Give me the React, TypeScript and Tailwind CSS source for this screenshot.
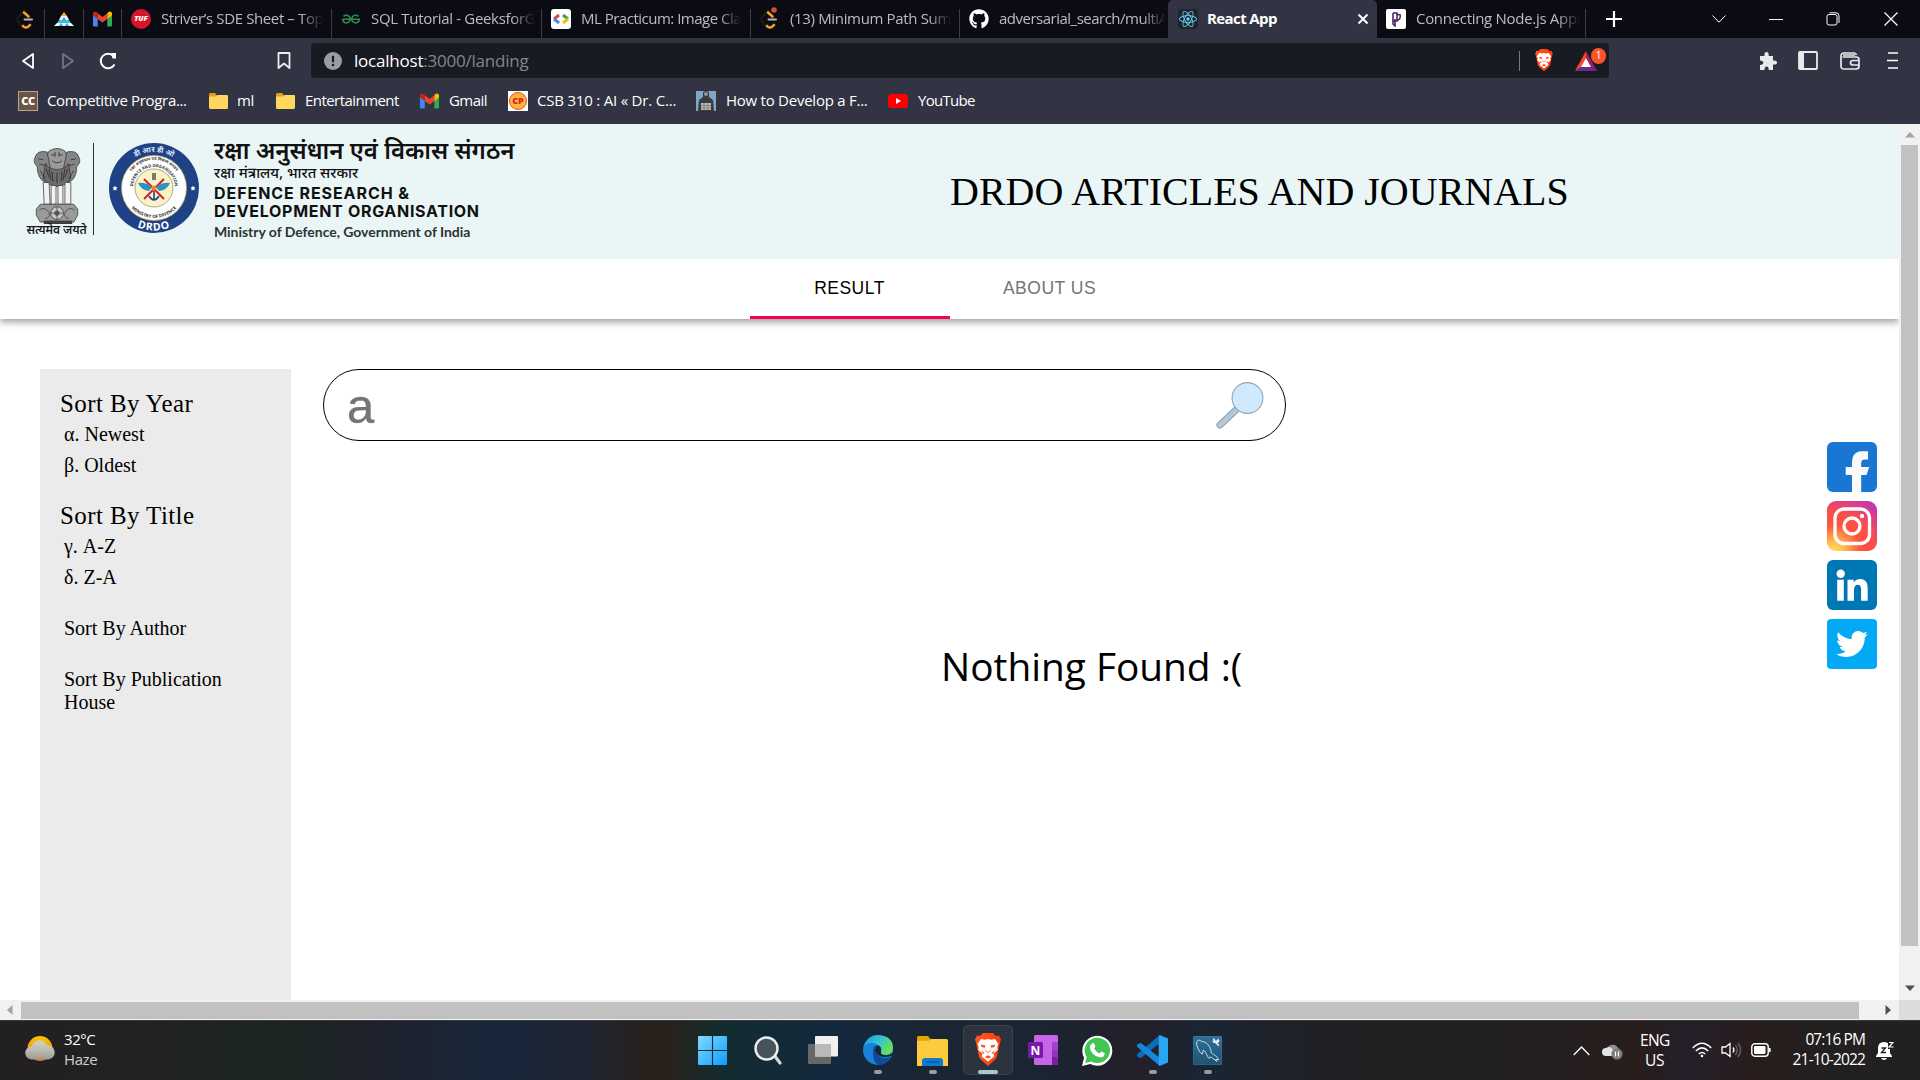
import type { ReactNode } from "react";
import { FaGithub, FaTwitter } from "react-icons/fa";
import { SiGeeksforgeeks, SiReact } from "react-icons/si";

/* ---------- small icons ---------- */

function GmailIcon() {
  return (
    <svg viewBox="0 0 20 16" className="h-4 w-[19px] shrink-0">
      <path d="M0 3v11.5Q0 16 1.5 16H5V7z" fill="#4285f4" />
      <path d="M20 3v11.500q0 1.500-1.500 1.500H15V7z" fill="#34a853" />
      <path d="M15 2v6l5-3.600V2.500C20 0 17.500-.5 16 .8z" fill="#fbbc04" />
      <path d="M5 8V2l5 3.800L15 2v6l-5 3.800z" fill="#ea4335" />
      <path d="M0 2.500v1.900L5 8V2L4 .8C2.500-.5 0 0 0 2.500z" fill="#c5221f" />
    </svg>
  );
}

function PyramidIcon() {
  return (
    <svg viewBox="0 0 20 14" className="h-[14px] w-5">
      <path d="M10 0l3 4H7z" fill="#f4b04a" />
      <path d="M7 4h6l2 4H5z" fill="#e9f7fa" />
      <path d="M5 8h10l2 3H3z" fill="#49b8d8" />
      <path d="M3 11h14l3 3H0z" fill="#f2fbfd" />
      <path d="M5 14l2-3 2 3zM11 14l2-3 2 3zM8 8l2-3 2 3z" fill="#2aa5c8" />
    </svg>
  );
}

function FolderIcon() {
  return (
    <svg viewBox="0 0 19 16" className="h-4 w-[19px] shrink-0">
      <path d="M0 1.500Q0 0 1.500 0H6l2 2.500h9.500Q19 2.500 19 4v4H0z" fill="#e0a018" />
      <path d="M0 4.500Q0 3.500 1 3.500h6L8.500 2H18q1 0 1 1v11.500q0 1.500-1.500 1.500h-16Q0 16 0 14.500z" fill="#ffd75e" />
    </svg>
  );
}

function LeetIcon({ badge = false }: { badge?: boolean }) {
  return (
    <svg viewBox="0 0 20 24" className="h-6 w-5">
      <path d="M9 3L3 9.500Q0 13 3 16l4 5" stroke="#1d1a14" strokeWidth="2.400" fill="none" />
      <path d="M8 5.500l4.500 4M7 19q3 3.500 7-1" stroke="#f0a22e" strokeWidth="2.600" fill="none" strokeLinecap="round" />
      <path d="M8.500 12.500H16" stroke="#b8b8b8" strokeWidth="2" strokeLinecap="round" />
      {badge && <circle cx="14" cy="3" r="2.800" fill="#e0443c" />}
    </svg>
  );
}

function CodeLabsIcon() {
  return (
    <span className="flex size-5 items-center justify-center rounded-[3px] bg-white">
      <svg viewBox="0 0 18 10" className="h-[10px] w-[18px]" fill="none" strokeWidth="3">
        <path d="M7 1L2 5" stroke="#ea4335" />
        <path d="M2 5l5 4" stroke="#4285f4" />
        <path d="M11 1l5 4" stroke="#34a853" />
        <path d="M16 5l-5 4" stroke="#fbbc04" />
      </svg>
    </span>
  );
}

function BraveLion({ className }: { className: string }) {
  return (
    <svg viewBox="0 0 26 34" className={className}>
      <defs>
        <linearGradient id="lion" x1="0" x2="1">
          <stop offset="0" stopColor="#ff5a1c" />
          <stop offset="1" stopColor="#fb3a10" />
        </linearGradient>
      </defs>
      <path d="M8 0h10l3 3 3-.5 2 4-1 3-3 14q-.5 2-3 4l-6 5.500-6-5.500q-2.500-2-3-4L1 9.500 0 6.500l2-4L5 3z" fill="url(#lion)" />
      <path d="M6 6l4 .8 3-.8 3 .8 4-.8 3.500 5-1.200 2.800.4 3.200-4.200 3.500.8 3L13 28.500 6.700 23.500l.8-3L3.300 17l.4-3.200L2.500 11z" fill="#fff" />
      <path d="M5.500 11.500l5 .9-.8 2.300-2.900-.8zM20.500 11.500l-5 .9.8 2.300 2.900-.8zM11.300 14.500l-.8 3.700 2.500 1.600 2.500-1.600-.8-3.700.3 3.200-2 1.200-2-1.200zM6 17.500l3.500 2.200-1 1.300zM20 17.500l-3.500 2.200 1 1.300zM9.800 24l3.200-1.700 3.200 1.700-3.200 1.600z" fill="#fb4a18" />
    </svg>
  );
}

/* ---------- browser chrome ---------- */

type Tab = { icon: ReactNode; label: string; text: string; width: string };

const pinned = [
  { id: "leet", icon: <LeetIcon />, box: "w-[45px] pl-2" },
  { id: "pyramid", icon: <PyramidIcon />, box: "w-[39px]" },
  { id: "gmail", icon: <GmailIcon />, box: "w-[38px]" },
];

const tabs: Tab[] = [
  {
    icon: (
      <span className="flex size-5 items-center justify-center rounded-full bg-[#d7152a] text-[7.5px] font-extrabold italic text-white">TUF</span>
    ),
    label: "Striver’s SDE Sheet – Top",
    text: "tracking-[-0.38px]",
    width: "w-[210px]",
  },
  { icon: <SiGeeksforgeeks className="size-[18px] text-[#2f8d46]" />, label: "SQL Tutorial - GeeksforG", text: "tracking-[-0.32px]", width: "w-[210px]" },
  { icon: <CodeLabsIcon />, label: "ML Practicum: Image Cla", text: "tracking-[-0.5px]", width: "w-[209px]" },
  { icon: <LeetIcon badge />, label: "(13) Minimum Path Sum", text: "tracking-[-0.34px]", width: "w-[209px]" },
  { icon: <FaGithub className="size-5 text-white" />, label: "adversarial_search/multiA", text: "tracking-[-0.5px]", width: "w-[208px]" },
];

function TabStrip() {
  return (
    <div className="flex h-[38px] bg-[#0b0b14] text-[15px] text-[#bcbcc0]">
      {pinned.map((p) => (
        <div key={p.id} className={`mt-[9px] flex h-[29px] shrink-0 justify-center border-r border-[#3c3c44] ${p.box}`}>
          <span className="flex h-5 items-center">{p.icon}</span>
        </div>
      ))}
      {tabs.map((t, i) => (
        <div
          key={t.label}
          className={`mt-[9px] flex h-[29px] shrink-0 gap-[10px] pr-0.5 pl-[9px] ${t.width} ${i < 4 ? "border-r border-[#3c3c44]" : ""}`}
        >
          <span className="flex size-5 shrink-0 items-center justify-center">{t.icon}</span>
          <span className={`h-5 overflow-hidden leading-[19px] whitespace-nowrap [mask-image:linear-gradient(90deg,#000_86%,transparent)] ${t.text}`}>{t.label}</span>
        </div>
      ))}
      <div className="flex w-[209px] shrink-0 rounded-t-[5px] bg-[#323443] pt-[9px] pl-[10px]">
        <span className="flex size-5 items-center justify-center rounded-[3px] bg-[#20232a]">
          <SiReact className="size-[18px] text-[#61dafb]" />
        </span>
        <span className="ml-[9px] w-[150px] text-[15px] leading-[19px] font-bold tracking-[-0.6px] text-white">React App</span>
        <svg viewBox="0 0 12 12" className="mt-[4px] size-3" stroke="#fff" strokeWidth="2">
          <path d="M1.500 1.500l9 9M10.500 1.500l-9 9" />
        </svg>
      </div>
      <div className="mt-[9px] flex h-[29px] w-[209px] shrink-0 gap-[10px] border-r border-[#3c3c44] pr-1 pl-[9px]">
        <span className="flex size-5 shrink-0 items-center justify-center rounded-[2px] bg-white">
          <svg viewBox="0 0 14 16" className="h-4 w-[14px]" fill="none" stroke="#4b2a63" strokeWidth="1.600">
            <path d="M4 2v11l2 2V8M4 2h4v8H4M8 4q5-2 2.500 4L8 10" />
          </svg>
        </span>
        <span className="h-5 overflow-hidden leading-[19px] tracking-[-0.3px] whitespace-nowrap [mask-image:linear-gradient(90deg,#000_86%,transparent)]">Connecting Node.js Appl</span>
      </div>
      <div className="flex h-[38px] flex-1 items-center text-white">
        <svg viewBox="0 0 16 16" className="ml-5 size-4" stroke="currentColor" strokeWidth="2.200">
          <path d="M8 0v16M0 8h16" />
        </svg>
        <svg viewBox="0 0 14 8" className="ml-[90px] h-2 w-[14px]" fill="none" stroke="currentColor">
          <path d="M.5 .5L7 7.200 13.500 .5" />
        </svg>
        <svg viewBox="0 0 14 14" className="ml-[43px] size-[14px]" fill="none" stroke="currentColor">
          <path d="M0 7.500h14" />
        </svg>
        <svg viewBox="0 0 14 14" className="ml-[43px] size-[14px]" fill="none" stroke="currentColor">
          <rect x="1" y="2.500" width="10" height="10.500" rx="2" />
          <path d="M3.500 .8H10q3 0 3 3v7" />
        </svg>
        <svg viewBox="0 0 14 14" className="ml-[44px] size-[14px]" fill="none" stroke="currentColor" strokeWidth="1.200">
          <path d="M.5 .5l13 13M13.500 .5l-13 13" />
        </svg>
      </div>
    </div>
  );
}

function Toolbar() {
  return (
    <div className="flex h-[45px] items-center bg-[#323443]">
      <svg viewBox="0 0 12 16" className="ml-[22px] h-4 w-3" fill="none" stroke="#fff" strokeWidth="1.800" strokeLinejoin="round">
        <path d="M11 1L1 8l10 7z" />
      </svg>
      <svg viewBox="0 0 12 16" className="ml-[28px] h-4 w-3" fill="none" stroke="#73747f" strokeWidth="1.800" strokeLinejoin="round">
        <path d="M1 1l10 7-10 7z" />
      </svg>
      <svg viewBox="0 0 18 18" className="ml-[25px] size-[18px]" fill="none" stroke="#fff" strokeWidth="2">
        <path d="M15.500 12.500A7.300 7.300 0 1 1 14.500 4" />
        <path d="M12 1h5v5.500h-3.500z" fill="#fff" stroke="none" />
      </svg>
      <svg viewBox="0 0 14 17" className="ml-[160px] h-[17px] w-[14px]" fill="none" stroke="#eee" strokeWidth="1.800" strokeLinejoin="round">
        <path d="M1.500 1h11v15L7 11.500 1.500 16z" />
      </svg>
      <div className="ml-5 flex h-[35px] w-[1298px] items-center rounded-[4px] bg-[#191b22]">
        <svg viewBox="0 0 18 18" className="ml-[13px] size-[18px]">
          <circle cx="9" cy="9" r="9" fill="#9b9ca6" />
          <path d="M9 3.800v6.400" stroke="#191b22" strokeWidth="2.200" />
          <circle cx="9" cy="13" r="1.300" fill="#191b22" />
        </svg>
        <span className="ml-[12px] w-[1165px] text-[17px] leading-[34px] tracking-[-0.22px] text-[#84858c]">
          <span className="text-white">localhost</span>:3000/landing
        </span>
        <span className="h-5 w-px bg-[#777881]" />
        <BraveLion className="ml-[14px] h-[23px] w-5" />
        <div className="relative ml-[21px] h-5 w-[23px]">
          <svg viewBox="0 0 22 20" className="h-5 w-[22px]">
            <path d="M11 0L0 20l6-3.500L11 7z" fill="#ff4724" />
            <path d="M11 0l11 20-6-3.500L11 7z" fill="#9e1f63" />
            <path d="M0 20h22l-6-4H6z" fill="#662d91" />
            <path d="M11 7l-5 9h10z" fill="#fff" />
          </svg>
          <span className="absolute -top-[3px] left-4 flex h-4 w-[15px] items-center justify-center rounded-full bg-[#fb542b] text-[10px] text-white">1</span>
        </div>
      </div>
      <svg viewBox="0 0 18 18" className="ml-[150px] size-[18px]" fill="#e9e9ec">
        <path d="M1 4h4.500Q5 0 7.500 0T9.700 4H14v4.500q4-.5 4 2t-4 2V18H9.700q.2-3.500-2-3.500T5.500 18H1v-5q3.300-.3 3.300-2.300T1 8.500z" />
      </svg>
      <svg viewBox="0 0 20 19" className="ml-[21px] h-[19px] w-5">
        <rect x="1" y="1" width="18" height="17" rx="1" fill="none" stroke="#e9e9ec" strokeWidth="1.800" />
        <path d="M1 1h5v17H1z" fill="#e9e9ec" />
      </svg>
      <svg viewBox="0 0 20 18" className="ml-[22px] h-[18px] w-5" fill="none" stroke="#e9e9ec" strokeWidth="1.700">
        <path d="M2.500 5H16q3 0 3 2.500V14q0 3-3 3H4q-3 0-3-3V4q0-3 3-3h10q2 0 2.500 2M3 3h12" />
        <path d="M19 8.500h-6q-2.500 0-2.500 2.200T13 13h6" />
      </svg>
      <svg viewBox="0 0 12 17" className="ml-[27px] h-[17px] w-3" stroke="#fff" strokeWidth="1.600">
        <path d="M1 1h10M0 8.500h11M1 16h10" />
      </svg>
    </div>
  );
}

const bookmarks = [
  {
    label: "Competitive Progra...",
    width: "w-[190px]",
    text: "tracking-[-0.33px]",
    icon: <span className="flex size-5 items-center justify-center border border-[#b9a48f] bg-[#6b5547] text-[11px] font-extrabold tracking-[-0.5px] text-white">CC</span>,
  },
  { label: "ml", width: "w-[67px]", text: "tracking-[-0.4px]", icon: <FolderIcon /> },
  { label: "Entertainment", width: "w-[144px]", text: "tracking-[-0.55px] pl-px", icon: <FolderIcon /> },
  { label: "Gmail", width: "w-[89px]", text: "tracking-[-0.55px] pl-px", icon: <GmailIcon /> },
  {
    label: "CSB 310 : AI « Dr. C...",
    width: "w-[188px]",
    text: "tracking-[-0.2px]",
    icon: (
      <span className="flex size-5 items-center justify-center bg-white">
        <span className="flex size-[18px] items-center justify-center rounded-full border border-[#e0522c] bg-[#ffb43c] text-[9px] font-extrabold text-[#d8261c]">CP</span>
      </span>
    ),
  },
  {
    label: "How to Develop a F...",
    width: "w-[192px]",
    text: "tracking-[-0.25px] pl-px",
    icon: (
      <svg viewBox="0 0 20 20" className="size-5">
        <path d="M0 0h20v20H0z" fill="#7ea6c6" />
        <path d="M7 1q3-2 6 0v5l4 3 1 11H2l1-11 4-3z" fill="#3b3a3c" />
        <circle cx="10" cy="3" r="2" fill="#999" />
        <path d="M5 12h10v7H5z" fill="#b9b9b9" />
        <path d="M5 14.500h10M5 17h10M8 12v7M12 12v7" stroke="#666" strokeWidth=".6" />
      </svg>
    ),
  },
  {
    label: "YouTube",
    width: "w-[100px]",
    text: "tracking-[-0.7px] pl-px",
    icon: (
      <svg viewBox="0 0 20 14" className="h-[14px] w-5">
        <rect width="20" height="14" rx="3.500" fill="#f00" />
        <path d="M8 4l5 3-5 3z" fill="#fff" />
      </svg>
    ),
  },
];

function BookmarkBar() {
  return (
    <div className="flex h-[41px] bg-[#323443] pl-[18px] text-[15px] text-white">
      {bookmarks.map((b) => (
        <div key={b.label} className={`flex h-9 shrink-0 items-center gap-[9px] ${b.width}`}>
          <span className="flex w-5 shrink-0 justify-center">{b.icon}</span>
          <span className={`pb-[3px] leading-5 whitespace-nowrap ${b.text}`}>{b.label}</span>
        </div>
      ))}
    </div>
  );
}

/* ---------- page ---------- */

function Emblem() {
  return (
    <div className="mt-[23px] ml-[25px] flex h-[92px] w-[63px] flex-col items-center">
      <svg viewBox="0 0 50 78" className="h-[78px] w-[50px]" stroke="#2b2b2b" strokeWidth=".7">
        <path d="M17 4q8-5 16 0l3 7-2 15H16l-2-15z" fill="#9a9a9a" />
        <path d="M15 5Q5 3 3 10q-3 5 2 10 0 9 5 14l8 4V20z" fill="#858585" />
        <path d="M35 5q10-2 12 5 3 5-2 10 0 9-5 14l-8 4V20z" fill="#858585" />
        <path d="M13 18q12 10 24 0l2 14q-6 8-14 8t-14-8z" fill="#6d6d6d" />
        <path d="M11 36h6l1 22h-6zM19 39h5v19h-5zM26 39h5v19h-5zM33 36h6v22h-6z" fill="#f2f2f2" />
        <path d="M8 58h34l4 5v6l-4 7H8l-4-7v-6z" fill="#9a9a9a" />
        <path d="M12 75h28v3H12z" fill="#444" />
        <circle cx="25" cy="67" r="6.500" fill="#c4c4c4" />
        <circle cx="25" cy="67" r="2.200" fill="#777" />
        <path d="M19 8h4M27 8h4M20 14q5 4 10 0M6 12l5 1M39 13l5-1M14 22l3 9M20 25l1 10M25 26v11M30 25l-1 10M36 22l-3 9M8 24l5 8M42 24l-5 8M7 17q4 3 8 0M35 17q4 3 8 0M23 5v5M27 5v5M17 22l2 12M33 22l-2 12" fill="none" stroke="#1c1c1c" />
        <path d="M7 64q5-4 9 1t-3 8M43 64q-5-4-9 1t3 8M18.500 67h13M25 60.500v13" fill="none" stroke="#3a3a3a" />
      </svg>
      <span className="font-['Noto_Sans_Devanagari','Noto_Sans',sans-serif] text-[12px] leading-[15px] font-semibold tracking-[-0.1px] whitespace-nowrap text-[#1b1b1b]">सत्यमेव जयते</span>
    </div>
  );
}

function Seal() {
  return (
    <svg viewBox="0 0 90 92" className="mt-[18px] ml-[15px] h-[92px] w-[90px]" fontFamily="'Noto Sans', sans-serif" fontWeight="700">
      <defs>
        <path id="sealBottom" d="M2.500 46a42.500 42.500 0 0 0 85 0" />
        <path id="sealTop" d="M9 46a36 36 0 0 1 72 0" />
        <path id="ringTop" d="M24 46a21 21 0 0 1 42 0" />
        <path id="ringOuter" d="M17 46a28 28 0 0 1 56 0" />
        <path id="ringBottom" d="M15 46a30 30 0 0 0 60 0" />
      </defs>
      <circle cx="45" cy="46" r="45" fill="#1f4287" />
      <circle cx="45" cy="46" r="32.500" fill="#fff" stroke="#c9a75c" strokeWidth=".8" />
      <circle cx="45" cy="46" r="19" fill="#fbf2c4" stroke="#8a8a6a" strokeWidth=".7" />
      <text fill="#fff" fontSize="10.500" letterSpacing="1" textAnchor="middle"><textPath href="#sealBottom" startOffset="50%">DRDO</textPath></text>
      <text fill="#dfe6f5" fontSize="7.500" textAnchor="middle"><textPath href="#sealTop" startOffset="50%">डी आर डी ओ</textPath></text>
      <text fill="#333" fontSize="4.200" textAnchor="middle"><textPath href="#ringTop" startOffset="50%">DEFENCE R&amp;D ORGANISATION</textPath></text>
      <text fill="#333" fontSize="4" textAnchor="middle"><textPath href="#ringOuter" startOffset="50%">रक्षा अनुसंधान एवं विकास संगठन</textPath></text>
      <text fill="#333" fontSize="4.500" textAnchor="middle"><textPath href="#ringBottom" startOffset="50%">MINISTRY OF DEFENCE</textPath></text>
      <path d="M6 43.500l.8 1.700 1.900.2-1.400 1.300.4 1.900L6 47.700l-1.700.9.400-1.900-1.400-1.300 1.900-.2z" fill="#fff" />
      <path d="M84 43.500l.8 1.700 1.900.2-1.400 1.300.4 1.900-1.700-.9-1.700.9.400-1.900-1.400-1.300 1.900-.2z" fill="#fff" />
      <path d="M35 37l20 20M55 37L35 57" stroke="#c8282e" strokeWidth="2" />
      <path d="M29 41q8-1 14 4l-3 4q-8-1-11-8zM61 41q-8-1-14 4l3 4q8-1 11-8z" fill="#2b94c4" />
      <path d="M45 49v9M40 54q5 8 10 0" stroke="#2b3f8c" strokeWidth="1.600" fill="none" />
      <circle cx="45" cy="46" r="2.500" fill="#f08a24" />
      <path d="M43 31h4v7h-4z" fill="#777" />
    </svg>
  );
}

function Header() {
  return (
    <header className="z-20 flex h-[135px] shrink-0 bg-[#eaf6f6]">
      <Emblem />
      <span className="mt-[19px] ml-[5px] h-[92px] w-px bg-[#2a2a2a]" />
      <Seal />
      <div className="ml-[15px] w-[736px] pt-[18px] whitespace-nowrap text-[#111]">
        <div className="h-[22px] font-['Noto_Sans_Devanagari','Noto_Sans',sans-serif] text-[24px] leading-[23px] font-semibold">रक्षा अनुसंधान एवं विकास संगठन</div>
        <div className="h-[21px] font-['Noto_Sans_Devanagari','Noto_Sans',sans-serif] text-[14.7px] leading-[22px] font-medium">रक्षा मंत्रालय, भारत सरकार</div>
        <div className="h-[17px] font-[Inter,sans-serif] text-[16px] leading-[17px] font-bold tracking-[0.94px]">DEFENCE RESEARCH &amp;</div>
        <div className="h-[19px] font-[Inter,sans-serif] text-[16px] leading-[19px] font-bold tracking-[0.7px]">DEVELOPMENT ORGANISATION</div>
        <div className="h-[21px] font-[Lato,sans-serif] text-[14px] leading-[22px] font-bold tracking-[-0.04px] text-[#2c3333]">Ministry of Defence, Government of India</div>
      </div>
      <h1 className="mt-[45px] font-['Liberation_Serif',serif] text-[40px] leading-[46px] whitespace-nowrap text-black">DRDO ARTICLES AND JOURNALS</h1>
    </header>
  );
}

function Nav() {
  return (
    <nav className="z-10 flex h-[60px] shrink-0 justify-center bg-white font-['Liberation_Sans',sans-serif] text-[17.5px] tracking-[0.5px] shadow-[0_2.5px_5px_-1px_rgba(0,0,0,0.2),0_5px_6px_rgba(0,0,0,0.14),0_1px_12px_rgba(0,0,0,0.12)]">
      <div className="flex w-[200px] items-center justify-center border-b-[3px] border-[#f50057] pt-0.5 text-black">RESULT</div>
      <div className="flex w-[200px] items-center justify-center border-b-[3px] border-transparent pt-0.5 text-[#757575]">ABOUT US</div>
    </nav>
  );
}

function Sidebar() {
  return (
    <aside className="h-[631px] w-[251px] shrink-0 bg-[#ebebeb] pt-5 pl-5 font-['Liberation_Serif',serif] text-[20px] leading-[23px] text-black">
      <h2 className="text-[25px] leading-[29px] tracking-[0.4px]">Sort By Year</h2>
      <ul className="pt-[5px] pl-1">
        <li className="h-[31px]">α. Newest</li>
        <li className="h-[31px]">β. Oldest</li>
      </ul>
      <h2 className="mt-4 text-[25px] leading-[29px] tracking-[0.4px]">Sort By Title</h2>
      <ul className="pt-[5px] pl-1">
        <li className="h-[31px]">γ. A-Z</li>
        <li className="h-[31px]">δ. Z-A</li>
      </ul>
      <p className="mt-5 pl-1">Sort By Author</p>
      <p className="mt-7 w-[180px] pl-1">Sort By Publication House</p>
    </aside>
  );
}

function SocialLinks() {
  return (
    <div className="mt-[73px] flex w-[50px] shrink-0 flex-col gap-[9px] text-white">
      <span className="block size-[50px] overflow-hidden rounded-[6px] bg-[#1976d2]">
        <svg viewBox="0 0 50 50" className="size-[50px]">
          <path d="M25 50V33h-6.300v-8H25v-4Q25 9.300 35 9.300h6v8.200h-3.500q-3.300 0-3.300 3.500v4h8l-2.700 8h-5.300v17z" fill="#fafafa" />
        </svg>
      </span>
      <svg viewBox="0 0 50 50" className="size-[50px]">
        <defs>
          <radialGradient id="igWarm" cx=".15" cy="1" r="1.150">
            <stop offset="0" stopColor="#ffdd55" />
            <stop offset=".15" stopColor="#ffc252" />
            <stop offset=".45" stopColor="#ff543e" />
            <stop offset=".68" stopColor="#fb4f48" />
            <stop offset="1" stopColor="#c837ab" />
          </radialGradient>
        </defs>
        <rect width="50" height="50" rx="9" fill="url(#igWarm)" />
        <g fill="none" stroke="#fff" strokeWidth="3.300">
          <rect x="8" y="8" width="34.500" height="34.500" rx="9" />
          <circle cx="25" cy="25" r="8" />
        </g>
        <circle cx="35" cy="15" r="2.200" fill="#fff" />
      </svg>
      <svg viewBox="0 0 50 50" className="size-[50px]">
        <rect width="50" height="50" rx="6" fill="#0077b5" />
        <circle cx="13.700" cy="13.700" r="4.200" fill="#fff" />
        <path d="M10.200 19.700h6.600v21h-6.600zM20.500 19.700h6.200v2.800q2-3.500 6.500-3.500 7.500 0 7.500 9v12.700h-6.600V29.500q0-4.700-3.400-4.700t-3.700 4.700v11.200h-6.500z" fill="#fff" />
      </svg>
      <span className="flex size-[50px] items-center justify-center rounded-[4px] bg-[#03a9f4]">
        <FaTwitter className="size-8" />
      </span>
    </div>
  );
}

function Results() {
  return (
    <main className="flex flex-1 bg-white pt-[50px] pl-10">
      <Sidebar />
      <section className="ml-8 w-[1504px]">
        <div className="flex h-[72px] w-[963px] items-center rounded-full border border-black pl-[23px] font-['Liberation_Sans',sans-serif] text-[49px] leading-[60px] text-[#757575]">
          <span className="w-[869px] pt-0.5 [-webkit-text-stroke:0.4px_#757575]">a</span>
          <svg viewBox="0 0 48 48" className="size-12">
            <path d="M21 28L4 44" stroke="#8b9cab" strokeWidth="7" strokeLinecap="round" />
            <path d="M21 28L4 44" stroke="#b5c8d6" strokeWidth="5" strokeLinecap="round" />
            <circle cx="31.500" cy="17" r="15.400" fill="#cfe9ff" stroke="#93a5b5" strokeWidth="1.100" />
          </svg>
        </div>
        <p className="mt-[198px] ml-[618px] text-[38.8px] leading-[54px] whitespace-nowrap text-black">Nothing Found :(</p>
      </section>
      <SocialLinks />
    </main>
  );
}

function Arrow({ d, color, className }: { d: string; color: string; className: string }) {
  return (
    <svg viewBox="0 0 10 10" className={`size-[10px] ${className}`}>
      <path d={d} fill={color} />
    </svg>
  );
}

/* ---------- taskbar ---------- */

function AppSlot({ children, state = "none" }: { children: ReactNode; state?: "none" | "open" | "active" }) {
  return (
    <div className="flex w-[55px] justify-center">
      <div className={`flex h-[50px] w-[50px] flex-col items-center rounded-[5px] ${state === "active" ? "bg-[#2c333e] ring-1 ring-[#3a414b] ring-inset" : ""}`}>
        <div className="flex h-[45px] items-center pt-[5px]">{children}</div>
        {state === "open" && <span className="h-1 w-2 rounded-full bg-[#989ba1]" />}
        {state === "active" && <span className="h-1 w-5 rounded-full bg-[#a5cbd3]" />}
      </div>
    </div>
  );
}

function Taskbar() {
  return (
    <footer className="flex h-[60px] border-t border-[#3a3a3c] bg-[linear-gradient(90deg,#222020_0px,#222222_130px,#1c2620_270px,#1e222b_370px,#18263b_500px,#1f2430_590px,#2b2019_660px,#122c30_725px,#13283e_835px,#1a2533_920px,#1b2432_1050px,#231f29_1140px,#1a2533_1200px,#202024_1330px,#222020_1500px,#291d1d_1640px,#231f29_1690px,#291d1d_1750px,#222020_1830px)] text-[15px] text-white">
      <div className="flex w-[685px] pl-[25px]">
        <svg viewBox="0 0 30 28" className="mt-[14px] h-[28px] w-[30px]">
          <defs>
            <linearGradient id="sun" x2="0" y2="1">
              <stop offset="0" stopColor="#ffc400" />
              <stop offset="1" stopColor="#f26a0a" />
            </linearGradient>
            <linearGradient id="cloud" x2="0" y2="1">
              <stop offset="0" stopColor="#d8d2a8" />
              <stop offset=".5" stopColor="#b9bdb8" />
              <stop offset="1" stopColor="#a8988a" />
            </linearGradient>
          </defs>
          <circle cx="15" cy="13.500" r="12.500" fill="url(#sun)" />
          <path d="M7 24.500a6.500 6.500 0 0 1-.5-13 8.500 8.500 0 0 1 16-1A7 7 0 0 1 23 24.500z" fill="url(#cloud)" />
        </svg>
        <div className="mt-[8px] ml-[9px] leading-5">
          <div className="tracking-[-0.45px]">32°C</div>
          <div className="tracking-[-0.4px] text-[#cfcfcf]">Haze</div>
        </div>
      </div>
      <div className="flex w-[550px] pt-1">
        <AppSlot>
          <svg viewBox="0 0 30 30" className="size-[29px]">
            <defs>
              <linearGradient id="win" x2="1" y2="1">
                <stop offset="0" stopColor="#7fdcff" />
                <stop offset="1" stopColor="#0f9bff" />
              </linearGradient>
            </defs>
            <path d="M0 1q0-1 1-1h13.400v14.400H0zM15.600 0H29q1 0 1 1v13.400H15.600zM0 15.600h14.400V30H1q-1 0-1-1zM15.600 15.600H30V29q0 1-1 1H15.600z" fill="url(#win)" />
          </svg>
        </AppSlot>
        <AppSlot>
          <svg viewBox="0 0 28 29" className="h-[29px] w-7">
            <path d="M20 19l6 8" stroke="#d5d8da" strokeWidth="3.200" strokeLinecap="round" />
            <circle cx="12.500" cy="12.500" r="11" fill="#46525c" stroke="#eceeef" strokeWidth="2.400" />
          </svg>
        </AppSlot>
        <AppSlot>
          <svg viewBox="0 0 30 28" className="h-7 w-[30px]">
            <rect y="8" width="23" height="20" rx="1" fill="#676767" />
            <rect x="7" width="23" height="20.500" rx="1" fill="#f0f0f0" />
            <path d="M7 8h16v12.500H7z" fill="#b9b9b9" />
          </svg>
        </AppSlot>
        <AppSlot state="open">
          <svg viewBox="0 0 30 30" className="size-[30px]">
            <defs>
              <linearGradient id="edgeTop" x2="1" y2=".5">
                <stop offset="0" stopColor="#2196d8" />
                <stop offset=".5" stopColor="#2fc3d6" />
                <stop offset="1" stopColor="#66e05a" />
              </linearGradient>
            </defs>
            <circle cx="15" cy="15" r="15" fill="#1683d8" />
            <path d="M1 11Q5 0 15 0q15 1 15 13 0 7-8 7-5 0-4-3 1-2-1-5Q9 4 1 11z" fill="url(#edgeTop)" />
            <path d="M10 15q0-5 6-5-4 3-2 8 3 7 14 4-4 8-13 8Q9 26 10 15z" fill="#114a9c" />
            <path d="M12 16q0-4 3.500-5.500Q19 12 18 16t4 4q4 .8 8-2.500l-.5 3Q17 25 12 16z" fill="#172636" />
          </svg>
        </AppSlot>
        <AppSlot state="open">
          <svg viewBox="0 0 31 31" className="size-[31px]">
            <path d="M0 2.500Q0 1 1.500 1H11l3 3.500V9H0z" fill="#e2a203" />
            <path d="M0 7q0-1.200 1.200-1.200H12L14 4h15.500Q31 4 31 5.500V31H0z" fill="#ffcb3e" />
            <path d="M5 31v-5q0-3 3-3h15q3 0 3 3v5z" fill="#0f7bd0" />
            <path d="M9 27h13" stroke="#0a4f96" strokeWidth="1.200" />
          </svg>
        </AppSlot>
        <AppSlot state="active">
          <BraveLion className="h-[34px] w-[26px]" />
        </AppSlot>
        <AppSlot>
          <svg viewBox="0 0 30 30" className="h-[30px] w-[30px]">
            <rect x="6" width="24" height="30" rx="1.500" fill="#c864e8" />
            <path d="M24 7h6v8h-6z" fill="#a53fd0" />
            <path d="M24 15h6v7h-6z" fill="#9333bd" />
            <path d="M24 22h6v6.500q0 1.500-1.500 1.500H24z" fill="#7a1fa2" />
            <rect y="7" width="15" height="16" rx="1.500" fill="#7719aa" />
            <text x="7.500" y="19.500" fontSize="12" fontWeight="700" fill="#fff" textAnchor="middle">N</text>
          </svg>
        </AppSlot>
        <AppSlot>
          <svg viewBox="0 0 30 30" className="size-[31px]">
            <path d="M0 30l2-8A14.500 14.500 0 1 1 8 28z" fill="#fff" />
            <path d="M3 27l1.500-5.500A12.300 12.300 0 1 1 9 25.700z" fill="#43c554" />
            <path d="M10 8q1.500-.6 2 .8l1 2.400-1.300 1.800q2 3.500 5.300 4.800l1.800-1.800 3 1.500q.6 4-4 4.200-9-1.700-10.200-9.700 0-2.500 2.400-4z" fill="#fff" />
          </svg>
        </AppSlot>
        <AppSlot state="open">
          <svg viewBox="0 0 30 30" className="size-[31px]">
            <path d="M22 0v8L3.500 22.500 0 20.500v-1.800z" fill="#0a6fb8" />
            <path d="M22 30v-8L3.500 7.500 0 9.500v1.800z" fill="#1488d8" />
            <path d="M22 0l8 3.500v23L22 30l-1-1V1z" fill="#2aa5f2" />
          </svg>
        </AppSlot>
        <AppSlot state="open">
          <svg viewBox="0 0 28 28" className="size-[29px]">
            <defs>
              <linearGradient id="sql" x2="0" y2="1">
                <stop offset="0" stopColor="#2f7098" />
                <stop offset="1" stopColor="#1f5272" />
              </linearGradient>
            </defs>
            <rect width="28" height="28" rx="2" fill="url(#sql)" stroke="#4a86aa" strokeWidth=".6" />
            <path d="M7 16Q2 8 4 5q1-2 4 0 7 1 9 8 0 4 3 5 3 1 5 5l-3-.5 1 2-4-3q-2-2-3-1 0 3-2-1-2-5-4-6l-1 4z" fill="none" stroke="#cfe0ea" strokeWidth=".9" />
            <path d="M19 2l2 .8.8 1.700 1.700-.6.500-1.700 1.500 2-.5 2-1.500.6L25.500 9l-1 .8-3-2.800-2-.6L18.500 4l1.500.8z" fill="#e8eef2" />
          </svg>
        </AppSlot>
      </div>
      <div className="flex flex-1 text-[15.5px]">
        <div className="flex w-[405px] items-center pl-[338px]">
          <svg viewBox="0 0 17 10" className="h-[10px] w-[17px] shrink-0" fill="none" stroke="#fff" strokeWidth="1.300">
            <path d="M.7 9l7.800-8 7.800 8" />
          </svg>
          <svg viewBox="0 0 21 18" className="ml-[12px] h-[18px] w-[21px] shrink-0">
            <path d="M6 5a6 6 0 0 1 10 1 4 4 0 0 1 1 7H5z" fill="#8f8f8f" />
            <path d="M4 14a4 4 0 0 1 0-8q4-3 7 2l2 6z" fill="#e4e4e4" />
            <circle cx="15" cy="12" r="5.600" fill="#7c7c7c" />
            <path d="M13.500 9.500v5M16.500 9.500v5" stroke="#fff" strokeWidth="1.200" />
          </svg>
        </div>
        <div className="mt-[9px] w-[29px] text-center leading-5">
          <div className="tracking-[-0.6px]">ENG</div>
          <div className="tracking-[-0.5px]">US</div>
        </div>
        <svg viewBox="0 0 20 16" className="mt-[21px] ml-[23px] h-4 w-5 shrink-0" fill="none" stroke="#fff" strokeWidth="1.500">
          <path d="M.8 6q9.200-9.500 18.400 0M3.800 9q6.200-6.200 12.400 0M6.800 12q3.200-3 6.400 0" />
          <circle cx="10" cy="14" r="1.300" fill="#fff" stroke="none" />
        </svg>
        <svg viewBox="0 0 21 18" className="mt-[20px] ml-[9px] h-[18px] w-[21px] shrink-0" fill="none" stroke="#fff" strokeWidth="1.300">
          <path d="M1 6h3.500L9 2.500v13L4.500 12H1zM12 6.500q2 2.500 0 5" />
          <path d="M14.500 4q3.500 5 0 10M17 2q5 7 0 14" stroke="#6b6767" />
        </svg>
        <svg viewBox="0 0 20 14" className="mt-[22px] ml-[9px] h-[14px] w-5 shrink-0">
          <rect x=".8" y=".8" width="16.400" height="12.400" rx="3" fill="none" stroke="#fff" strokeWidth="1.400" />
          <rect x="3" y="3" width="11.500" height="8" rx="1" fill="#fff" />
          <path d="M18.700 5v4" stroke="#fff" strokeWidth="1.800" />
        </svg>
        <div className="mt-[8px] w-[94px] shrink-0 text-right leading-5 whitespace-nowrap">
          <div className="tracking-[-0.9px]">07:16 PM</div>
          <div className="tracking-[-0.85px]">21-10-2022</div>
        </div>
        <svg viewBox="0 0 18 19" className="mt-[20px] ml-[11px] h-[19px] w-[18px] shrink-0">
          <path d="M8 1q6 0 6 6v5l2 3v1H0v-1l2-3V7q0-6 6-6zM5 17h6q-1 2-3 2t-3-2z" fill="#fff" />
          <path d="M5.500 7h4l-4 4.500H10" fill="none" stroke="#222020" strokeWidth="1.300" />
          <path d="M12 0h6v8h-6z" fill="#222020" />
          <path d="M13 1.500h4L13 6h4.500" fill="none" stroke="#fff" strokeWidth="1.200" />
        </svg>
      </div>
    </footer>
  );
}

export default function App() {
  return (
    <div className="flex h-[1080px] w-[1920px] flex-col overflow-hidden bg-white font-['Open_Sans','Noto_Sans',sans-serif]">
      <TabStrip />
      <Toolbar />
      <BookmarkBar />
      <div className="flex h-[876px]">
        <div className="flex w-[1899px] flex-col overflow-hidden">
          <Header />
          <Nav />
          <Results />
        </div>
        <div className="flex flex-1 flex-col items-center bg-[#f1f1f1]">
          <Arrow d="M0 7.500L5 2l5 5.500z" color="#a3a3a3" className="mt-[6px]" />
          <span className="mt-[5px] h-[801px] w-[17px] bg-[#c1c1c1]" />
          <Arrow d="M0 2.500L5 8l5-5.500z" color="#505050" className="mt-[37px]" />
        </div>
      </div>
      <div className="flex h-5 items-center bg-[#f1f1f1]">
        <Arrow d="M7.500 0L2 5l5.500 5z" color="#a3a3a3" className="ml-[5px]" />
        <span className="ml-[6px] h-[17px] w-[1838px] bg-[#c1c1c1]" />
        <Arrow d="M2.500 0L8 5l-5.500 5z" color="#505050" className="ml-6" />
        <span className="ml-auto h-5 w-[21px] bg-[#dcdcdc]" />
      </div>
      <Taskbar />
    </div>
  );
}
